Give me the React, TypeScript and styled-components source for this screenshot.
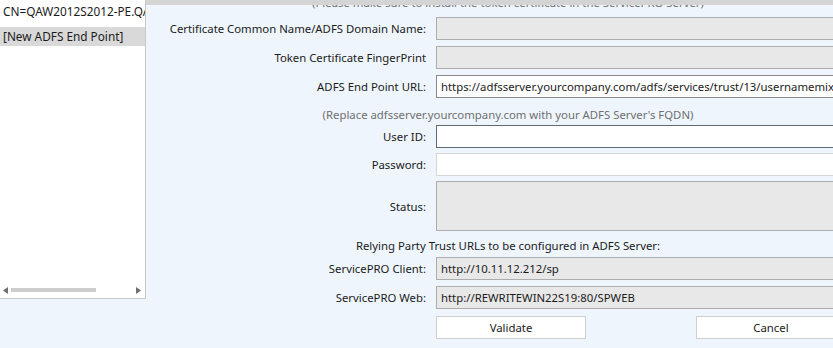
import React from "react";
import styled, { createGlobalStyle } from "styled-components";

const GlobalStyle = createGlobalStyle`
    html, body {
        margin: 0;
        padding: 0;
        overflow: hidden;
        background: #eef5fd;
    }
    body {
        font-family: "Noto Sans", "Open Sans", sans-serif;
        font-size: 11.35px;
        color: #1b1b1b;
    }
`;

const Screen = styled.div`
    display: flex;
    width: 833px;
    height: 348px;
    overflow: hidden;
    background: #eef5fd;
`;

const ListPanel = styled.div`
    flex: 0 0 146px;
    height: 299px;
    display: flex;
    flex-direction: column;
    background: #ffffff;
    border-right: 1px solid #c9c9c9;
    border-bottom: 1px solid #c9c9c9;
    box-sizing: border-box;
    overflow: hidden;
`;

const ListItems = styled.div`
    flex: 1;
    display: flex;
    flex-direction: column;
    gap: 6px;
    padding-top: 2px;
`;

const ListItem = styled.div<{ $selected?: boolean }>`
    height: 19px;
    line-height: 19px;
    padding-left: 3px;
    font-size: 11.8px;
    white-space: nowrap;
    overflow: hidden;
    background: ${(p) => (p.$selected ? "#d9d9d9" : "transparent")};
`;

const HScroll = styled.div`
    height: 16px;
    display: flex;
    align-items: center;
    gap: 3px;
    padding: 0 4px 0 3px;
`;

const Arrow = styled.svg`
    flex: 0 0 5px;
    width: 5px;
    height: 7px;
    fill: #6f6f6f;
`;

const Track = styled.div`
    flex: 1;
    height: 4px;
    display: flex;
`;

const Thumb = styled.div`
    width: 85px;
    height: 4px;
    background: #cdcdcd;
`;

const Main = styled.div`
    flex: 1;
    display: flex;
    flex-direction: column;
    min-width: 0;
`;

const TopBar = styled.div`
    height: 5px;
    background: #d4d4d4;
`;

const NoteClip = styled.div`
    height: 12px;
    overflow: hidden;
`;

const Note = styled.div<{ $top?: number; $h?: number; $dark?: boolean }>`
    width: 724px;
    text-align: center;
    color: ${(p) => (p.$dark ? "#1b1b1b" : "#707070")};
    height: ${(p) => p.$h ?? 16}px;
    line-height: ${(p) => p.$h ?? 16}px;
    white-space: nowrap;
    margin-top: ${(p) => p.$top ?? 0}px;
`;

const Row = styled.div<{ $top: number; $h?: number }>`
    display: grid;
    grid-template-columns: 280px 440px;
    column-gap: 10px;
    align-items: center;
    margin-top: ${(p) => p.$top}px;
    height: ${(p) => p.$h ?? 23}px;
`;

const Label = styled.div`
    text-align: right;
    white-space: nowrap;
`;

type FieldKind = "disabled" | "active" | "focus" | "light";

const fieldBorder: Record<FieldKind, string> = {
    disabled: "#adadad",
    active: "#8a8a8a",
    focus: "#5f6a74",
    light: "#d6d6d6",
};

const Field = styled.div<{ $kind: FieldKind }>`
    height: 100%;
    box-sizing: border-box;
    border: 1px solid ${(p) => fieldBorder[p.$kind]};
    background: ${(p) => (p.$kind === "disabled" ? "#e8e8e8" : "#ffffff")};
    padding: 0 4px;
    display: flex;
    align-items: center;
    white-space: nowrap;
    overflow: hidden;
`;

const ButtonRow = styled.div`
    display: flex;
    gap: 110px;
    margin-top: 7px;
    margin-left: 290px;
    height: 23px;
`;

const Button = styled.button`
    flex: 0 0 150px;
    height: 23px;
    background: #ffffff;
    border: 1px solid #d0d0d0;
    font: inherit;
    color: #1b1b1b;
    padding: 0;
`;

export default function App() {
    return (
        <>
            <GlobalStyle />
            <Screen>
                <ListPanel>
                    <ListItems>
                        <ListItem>CN=QAW2012S2012-PE.QA</ListItem>
                        <ListItem $selected>[New ADFS End Point]</ListItem>
                    </ListItems>
                    <HScroll>
                        <Arrow viewBox="0 0 5 7">
                            <path d="M5 0 L0 3.5 L5 7 Z" />
                        </Arrow>
                        <Track>
                            <Thumb />
                        </Track>
                        <Arrow viewBox="0 0 5 7">
                            <path d="M0 0 L5 3.5 L0 7 Z" />
                        </Arrow>
                    </HScroll>
                </ListPanel>
                <Main>
                    <TopBar />
                    <NoteClip>
                        <Note $top={-10}>
                            (Please make sure to install the token certificate in the ServicePRO Server)
                        </Note>
                    </NoteClip>
                    <Row $top={0}>
                        <Label>Certificate Common Name/ADFS Domain Name:</Label>
                        <Field $kind="disabled" />
                    </Row>
                    <Row $top={6}>
                        <Label>Token Certificate FingerPrint</Label>
                        <Field $kind="disabled" />
                    </Row>
                    <Row $top={6}>
                        <Label>ADFS End Point URL:</Label>
                        <Field $kind="active">
                            https://adfsserver.yourcompany.com/adfs/services/trust/13/usernamemixed
                        </Field>
                    </Row>
                    <Note $top={7} $h={20}>
                        (Replace adfsserver.yourcompany.com with your ADFS Server's FQDN)
                    </Note>
                    <Row $top={0}>
                        <Label>User ID:</Label>
                        <Field $kind="focus" />
                    </Row>
                    <Row $top={5}>
                        <Label>Password:</Label>
                        <Field $kind="light" />
                    </Row>
                    <Row $top={5} $h={50}>
                        <Label>Status:</Label>
                        <Field $kind="disabled" />
                    </Row>
                    <Note $top={4} $h={22} $dark>
                        Relying Party Trust URLs to be configured in ADFS Server:
                    </Note>
                    <Row $top={0}>
                        <Label>ServicePRO Client:</Label>
                        <Field $kind="disabled">http://10.11.12.212/sp</Field>
                    </Row>
                    <Row $top={6}>
                        <Label>ServicePRO Web:</Label>
                        <Field $kind="disabled">http://REWRITEWIN22S19:80/SPWEB</Field>
                    </Row>
                    <ButtonRow>
                        <Button>Validate</Button>
                        <Button>Cancel</Button>
                    </ButtonRow>
                </Main>
            </Screen>
        </>
    );
}
